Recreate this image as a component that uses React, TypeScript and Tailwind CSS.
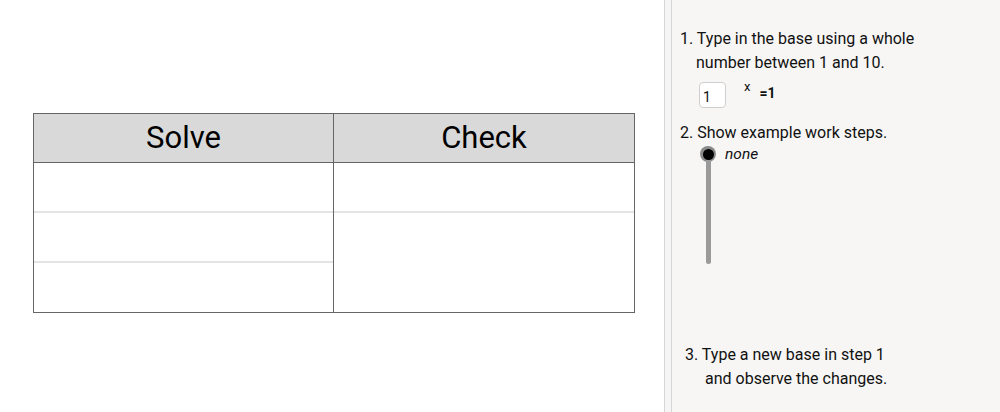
import React from 'react'

const font = { fontFamily: 'Roboto, "Liberation Sans", sans-serif' }

function Table() {
  return (
    <div className="ml-[33px] mt-[113px] w-[602px] border border-[#666666] text-black">
      <div className="grid grid-cols-[300px_300px] h-[49px] bg-[#d9d9d9] border-b border-[#666666]">
        <div className="flex items-center justify-center text-[31px] border-r border-[#666666]">Solve</div>
        <div className="flex items-center justify-center text-[31px]">Check</div>
      </div>
      <div className="grid grid-cols-[300px_300px] bg-white">
        <div className="border-r border-[#666666]">
          <div className="h-[50px] border-b-2 border-[#e4e4e4]" />
          <div className="h-[50px] border-b-2 border-[#e4e4e4]" />
          <div className="h-[49px]" />
        </div>
        <div>
          <div className="h-[50px] border-b-2 border-[#e4e4e4]" />
          <div className="h-[99px]" />
        </div>
      </div>
    </div>
  )
}

function Panel() {
  return (
    <div className="flex-1 bg-[#f7f6f5] h-full text-[16px] text-[#111] leading-[24px]">
      <div className="pl-[8px] pt-[27px]">1. Type in the base using a whole</div>
      <div className="pl-[24px]">number between 1 and 10.</div>
      <div className="flex items-start mt-[5px] pl-[27px] h-[32px]">
        <div className="w-[27px] h-[26px] mt-[2px] border border-[#cfcfcf] rounded-[4px] bg-white text-[14px] leading-[26px] pl-[3px] pt-[1px]">1</div>
        <span className="ml-[18px] text-[13px] leading-[16px] -mt-[1px]">x</span>
        <span className="ml-[9px] text-[14px] font-bold leading-[24px] mt-[1px]">=1</span>
      </div>
      <div className="pl-[8px] mt-[9px]">2. Show example work steps.</div>
      <div className="flex pl-[28px] mt-[1px]">
        <div className="flex flex-col items-center w-[16px]">
          <div className="w-[16px] h-[16px] rounded-full bg-[#8a8a8a] flex items-center justify-center">
            <div className="w-[11px] h-[11px] rounded-full bg-black" />
          </div>
          <div className="w-[5px] h-[104px] bg-[#9a9a9a] rounded-b-[3px] -mt-[2px]" />
        </div>
        <span className="italic ml-[9px] -mt-[4px] text-[15.5px]">none</span>
      </div>
      <div className="pl-[13px] mt-[79px]">3. Type a new base in step 1</div>
      <div className="pl-[33px]">and observe the changes.</div>
    </div>
  )
}

export default function App() {
  return (
    <div className="flex w-[1000px] h-[412px] overflow-hidden bg-white" style={font}>
      <div className="w-[664px] h-full bg-white">
        <Table />
      </div>
      <div className="w-[8px] h-full border-l border-r border-[#d6d6d6] bg-[#f5f5f5]" />
      <Panel />
    </div>
  )
}
